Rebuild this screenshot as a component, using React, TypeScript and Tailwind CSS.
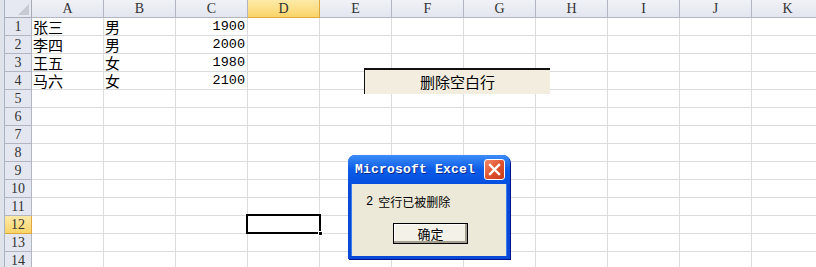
import React from 'react';

const cols = ['A', 'B', 'C', 'D', 'E', 'F', 'G', 'H', 'I', 'J', 'K'];
const data: Record<number, [string, string, string]> = {
  1: ['张三', '男', '1900'],
  2: ['李四', '男', '2000'],
  3: ['王五', '女', '1980'],
  4: ['马六', '女', '2100'],
};

const mono = { fontFamily: '"Liberation Mono", "DejaVu Sans Mono", monospace' };
const serif = { fontFamily: '"Liberation Serif", "DejaVu Serif", serif' };
const cjk = { fontFamily: '"Noto Sans CJK SC", "Liberation Sans", sans-serif' };

export default function App() {
  const rows = Array.from({ length: 14 }, (_, i) => i + 1);

  return (
    <div className="relative w-[816px] h-[267px] overflow-hidden bg-white flex">
      {/* left frame strip */}
      <div className="w-[5px] h-full shrink-0 bg-[#dfe3ea] border-r border-[#a9b3c2]" />

      <div className="flex flex-col">
        {/* column headers */}
        <div className="flex h-[18px] shrink-0">
          <div className="w-[27px] shrink-0 bg-[#e6e9f1] border-r border-b border-[#a6abb5] relative">
            <svg className="absolute right-[2px] bottom-[2px]" width="11" height="11" viewBox="0 0 11 11">
              <polygon points="11,0 11,11 0,11" fill="#c6cad2" />
            </svg>
          </div>
          {cols.map((c) => (
            <div
              key={c}
              style={serif}
              className={
                c === 'D'
                  ? 'w-[72px] shrink-0 flex items-center justify-center text-[14px] leading-[17px] text-[#333] bg-gradient-to-b from-[#fdeaa8] to-[#f9d466] border-r border-b border-[#e2a73c]'
                  : 'w-[72px] shrink-0 flex items-center justify-center text-[14px] leading-[17px] text-[#333] bg-gradient-to-b from-[#f0f2f7] to-[#e3e6ef] border-r border-b border-[#b1b6c2]'
              }
            >
              {c}
            </div>
          ))}
        </div>

        {rows.map((r) => (
          <div key={r} className="flex h-[18px] shrink-0">
            <div
              style={serif}
              className={
                r === 12
                  ? 'w-[27px] shrink-0 flex items-center justify-center text-[14px] leading-[17px] text-[#333] bg-gradient-to-b from-[#fdeaa8] to-[#f9d466] border-r border-b border-[#e2a73c]'
                  : 'w-[27px] shrink-0 flex items-center justify-center text-[14px] leading-[17px] text-[#333] bg-[#e4e7f0] border-r border-b border-[#b1b6c2]'
              }
            >
              {r}
            </div>
            {cols.map((c, ci) => {
              const v = data[r]?.[ci];
              const isNum = ci === 2;
              return (
                <div
                  key={c}
                  style={isNum ? mono : cjk}
                  className={
                    isNum
                      ? 'w-[72px] shrink-0 flex items-center justify-end pr-[2px] text-[13.5px] leading-[17px] text-black border-r border-b border-[#dadcdd]'
                      : 'w-[72px] shrink-0 flex items-center pl-[1px] text-[15px] leading-[17px] text-black border-r border-b border-[#dadcdd]'
                  }
                >
                  {v}
                </div>
              );
            })}
          </div>
        ))}
      </div>

      {/* active cell D12 */}
      <div className="absolute left-[246px] top-[214px] w-[75px] h-[20px] border-2 border-black" />
      <div className="absolute left-[318px] top-[231px] w-[5px] h-[5px] bg-black border border-white" />

      {/* form button on sheet */}
      <div
        style={cjk}
        className="absolute left-[364px] top-[68px] w-[186px] h-[26px] bg-[#f3ede0] border-t-2 border-l border-[#111] flex items-center justify-center text-[15px] text-black"
      >
        删除空白行
      </div>

      {/* message box */}
      <div className="absolute left-[348px] top-[155px] w-[162px] h-[104px] rounded-t-[7px] bg-[#0a48d8] flex flex-col shadow-[1px_1px_0_#00138c]">
        <div className="h-[29px] shrink-0 rounded-t-[7px] bg-gradient-to-b from-[#3c8cf8] via-[#0b5ce8] to-[#0650df] flex items-center pl-[7px] pr-[5px]">
          <span
            style={mono}
            className="flex-1 text-[13px] font-bold text-white tracking-[0.2px] [text-shadow:1px_1px_0_#0a2a8a]"
          >
            Microsoft Excel
          </span>
          <div className="w-[21px] h-[21px] rounded-[3px] border border-white bg-gradient-to-br from-[#f08a6a] via-[#e1532e] to-[#c73a17] flex items-center justify-center">
            <svg width="13" height="13" viewBox="0 0 13 13">
              <path d="M2 2 L11 11 M11 2 L2 11" stroke="white" strokeWidth="2.4" strokeLinecap="square" />
            </svg>
          </div>
        </div>
        <div className="flex-1 mx-[3px] mb-[3px] bg-[#ece9d8] border-l border-r border-[#3a7bf0] flex flex-col">
          <div style={cjk} className="mt-[10px] ml-[14px] text-[12px] text-black leading-[16px] flex items-center gap-[5px]">
            <span style={mono}>2</span>
            <span>空行已被删除</span>
          </div>
          <div className="mt-[13px] ml-[41px] w-[75px] h-[21px] border border-black bg-[#f3f1e8] shadow-[inset_-2px_-2px_0_#a39e8e,inset_1px_1px_0_#ffffff] flex items-center justify-center">
            <span style={cjk} className="text-[13px] leading-[16px] text-black">确定</span>
          </div>
        </div>
      </div>
    </div>
  );
}
